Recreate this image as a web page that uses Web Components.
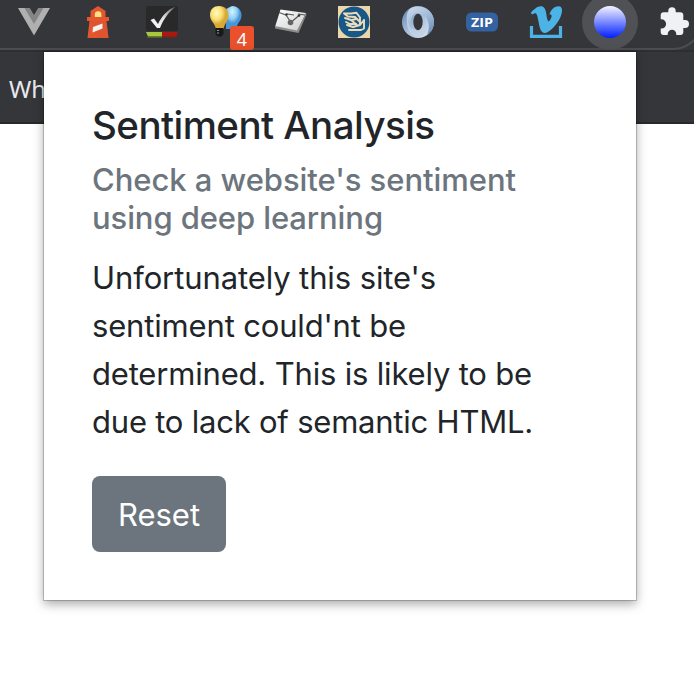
<!DOCTYPE html>
<html lang="en">
<head>
<meta charset="utf-8">
<title>Sentiment Analysis</title>
<style>
html,body{margin:0;height:100%;background:#fff;overflow:hidden}
body{font-family:Inter,"Liberation Sans",sans-serif;color:#212529}
</style>
</head>
<body>
<browser-window>
  <extension-bar slot="chrome">
    <extension-icon name="vue"></extension-icon>
    <extension-icon name="lighthouse"></extension-icon>
    <extension-icon name="check"></extension-icon>
    <extension-icon name="bulbs" badge="4"></extension-icon>
    <extension-icon name="envelope"></extension-icon>
    <extension-icon name="hands"></extension-icon>
    <extension-icon name="ring"></extension-icon>
    <extension-icon name="zip"></extension-icon>
    <extension-icon name="vimeo"></extension-icon>
    <extension-icon name="sphere" active></extension-icon>
    <extension-icon name="puzzle"></extension-icon>
  </extension-bar>
  <bookmark-bar slot="chrome">Wh</bookmark-bar>
  <popup-card>
    <fit-line slot="title" width="342.5">Sentiment Analysis</fit-line>
    <fit-line slot="subtitle" width="424">Check a website's sentiment</fit-line>
    <fit-line slot="subtitle" width="291">using deep learning</fit-line>
    <fit-line slot="body" width="344">Unfortunately this site's</fit-line>
    <fit-line slot="body" width="314">sentiment could'nt be</fit-line>
    <fit-line slot="body" width="440">determined. This is likely to be</fit-line>
    <fit-line slot="body" width="441">due to lack of semantic HTML.</fit-line>
    <reset-button slot="action">Reset</reset-button>
  </popup-card>
</browser-window>

<script>
const icons = {
vue:`<path d="M2 8H13L18 15.5 23 8H34L18 35.5Z" fill="#b0b0b0"/><path d="M8.500 8H14L18 15 22 8H27.500L18 24Z" fill="#858585"/><path d="M14 8H22L18 14.500Z" fill="#35363a"/>`,
lighthouse:`<path d="M18 6L25.500 11V17H29V21H26.500L28.500 38H7.500L9.500 21H7V17H10.500V11Z" fill="#e4572e"/><path d="M10.500 21H26.500L28.500 38H18Z" fill="#cf4f30" opacity=".3"/><path d="M14.800 17V14.500a3.300 3.300 0 0 1 6.600 0V17Z" fill="#ffe184"/><path d="M13 27L22.500 23.500V28.500L12.500 32.500Z" fill="#f2f2f2"/>`,
check:`<defs><linearGradient id="c" x1="0" y1="1" x2="1" y2="0"><stop stop-color="#fff"/><stop offset=".5" stop-color="#e0e0e0"/><stop offset="1" stop-color="#666"/></linearGradient></defs><rect x="2" y="6" width="32" height="25" rx="2" fill="#29292a"/><path d="M6.500 20L10 18.500 14 24C18 16 23 10 31.500 6.500C25 12 19.500 19 16 28H13Z" fill="url(#c)"/><path d="M2 32H18V36.500H4Z" fill="#a7c83d"/><path d="M18 32H34L32 36.500H18Z" fill="#ad1712"/><path d="M3 37.300H33" stroke="#62652c"/><path d="M18 37.300H33" stroke="#751713"/>`,
bulbs:`<defs><radialGradient id="y" cx=".35" cy=".3"><stop stop-color="#fffbc7"/><stop offset=".6" stop-color="#f9df72"/><stop offset="1" stop-color="#d9a936"/></radialGradient><radialGradient id="b" cx=".4" cy=".25"><stop stop-color="#d6f5ff"/><stop offset=".65" stop-color="#89cdf5"/><stop offset="1" stop-color="#4a95d7"/></radialGradient></defs><path d="M24 6C30 6 33.500 10.500 33.500 15C33.500 21 29 23 28 29H18V9Z" fill="url(#b)"/><path d="M11 6C17 6 20.500 10 20.500 15C20.500 21 16.500 23 15.500 29H8C7 23 2 21 2 15C2 9 6 6 11 6Z" fill="url(#y)"/><path d="M7.500 28H15.500V34L13.500 36.500H9.500L7.500 34Z" fill="#19191a"/><path d="M9 30.500H11M9 33H11" stroke="#9a9a94" stroke-width="1.200"/>`,
envelope:`<defs><linearGradient id="e" x1="0" y1="0" x2="1" y2="1"><stop stop-color="#fff"/><stop offset="1" stop-color="#ccc"/></linearGradient></defs><path d="M8.500 9.500L34 13 25 31.500 3 27Z" fill="url(#e)"/><path d="M34 13L34.500 14.500 26.500 33 3 28.500V26L25 30.500Z" fill="#8d8d8d"/><path d="M7 12.500L14 15M14 15L18 21M20.500 21L27 15.500M15 14L22 15M26 14L33 15" stroke="#555" fill="none" stroke-width="1.200"/><circle cx="18.500" cy="22.500" r="2.800" fill="#626262"/><circle cx="14.500" cy="14.500" r="1.200" fill="#333"/><circle cx="27" cy="15.500" r="1.300" fill="#333"/>`,
hands:`<rect x="2" y="6" width="32" height="32" fill="#ecd7ad"/><circle cx="18" cy="22" r="15.500" fill="#175888"/><g fill="none" stroke="#eedcb9" stroke-width="1.900" stroke-linejoin="round" stroke-linecap="round"><path d="M8 13.500H15L20.500 12.800L24 17.500V24M8 13.500L12 16.500L19 17L24 22M9 18L15 20L21 25"/><path d="M28 20V28.500L25 30H13M28 20L24 25L17 27L11 25M10 22L14 24L20 24M16 20L20 19"/></g>`,
ring:`<defs><linearGradient id="r" x1="0" y1="0" x2="1" y2="1"><stop stop-color="#5c80ad"/><stop offset=".45" stop-color="#a3bbd8"/><stop offset="1" stop-color="#e5edf7"/></linearGradient><linearGradient id="s" x1=".1" y1="0" x2=".8" y2="1"><stop stop-color="#e5edf7"/><stop offset=".55" stop-color="#99b4d4"/><stop offset="1" stop-color="#557ba9"/></linearGradient></defs><circle cx="18" cy="22" r="16" fill="url(#r)"/><path d="M11 8C22 3 34 11 34 22C34 28 31 33 27 35C31 26 29 16 18 13C11 13 9 22 12 30C5 24 5 12 11 8Z" fill="url(#s)" opacity=".8"/><path d="M9 12C5 20 10 31 18 31C24 31 28 24 25 15C31 24 27 35 18 37C8 37 4 21 9 12Z" fill="#c1d2e7" opacity=".75"/><ellipse cx="18" cy="22" rx="4.700" ry="8.300" fill="#35363a"/>`,
zip:`<rect x="2" y="12.500" width="32" height="19" rx="5.500" fill="#34619f"/><text x="18" y="26.500" text-anchor="middle" textLength="22" lengthAdjust="spacingAndGlyphs" fill="#fff" font-family="Open Sans,sans-serif" font-weight="700" font-size="12.500">ZIP</text>`,
vimeo:`<path d="M2.700 13C6 9 10 6 13 6.300C18 6.500 18 13 19 18C19.500 21 20.500 22.500 22 20C24 17 24.500 14 21.500 14.500C23 9 27 6 31 6.300C36 7 34 15 31 20C27 27 20 33 17 33C12 33 11.500 26 10 19C9 13.500 8 12 4.500 14.500Z" fill="#4cb3e6"/><path d="M3.500 26V36.300H32.500V26" fill="none" stroke="#4cb3e6" stroke-width="3.200"/>`,
sphere:`<defs><linearGradient id="p" x1="0" y1="0" x2="0" y2="1"><stop stop-color="#f5f5ff"/><stop offset="1" stop-color="#001fff"/></linearGradient></defs><circle cx="18" cy="22" r="16" fill="url(#p)"/>`,
puzzle:`<path d="M7.700 12.300H12.300V11a3.700 3.700 0 0 1 7.400 0V12.300H24.300Q27.300 12.300 27.300 15.300V20H29a4 4 0 0 1 0 8H27.300V32Q27.300 35 24.300 35H20.300V34a4.300 4.300 0 0 0-8.600 0V35H7.700Q4.700 35 4.700 32V28.500H5.500a4.600 4.600 0 0 0 0-9.200H4.700V15.300Q4.700 12.300 7.700 12.300Z" fill="#f0f1f3"/>`
};
function define(name, html, setup){
  const template=document.createElement('template'); template.innerHTML=html;
  customElements.define(name,class extends HTMLElement{
    connectedCallback(){
      if(this.shadowRoot)return;
      this.attachShadow({mode:'open'}).append(template.content.cloneNode(true));
      if(setup)setup(this,this.shadowRoot);
    }
  });
}
define('browser-window',`<style>:host{display:block;position:relative;height:674px;overflow:hidden;background:#fff}</style><slot name="chrome"></slot><slot></slot>`);
define('extension-bar',`<style>:host{display:block;position:relative;height:52px;overflow:hidden;box-sizing:border-box;background:#35363a;border-bottom:2px solid #2d2e31}
.pill{position:absolute;right:-9px;bottom:0;width:760px;height:70px;box-sizing:border-box;border:2px solid #4c4d50;border-radius:30px}
.row{display:flex;position:relative;padding-left:2px;width:704px}</style><div class="pill"></div><div class="row"><slot></slot></div>`);
define('extension-icon',`<style>:host{display:flex;position:relative;width:64px;height:50px;flex:none;justify-content:center}
svg{display:block;width:36px;height:44px;position:relative}.halo{display:none;position:absolute;width:56px;height:56px;border-radius:50%;background:#505154;left:4px;top:-6px}
:host([active]) .halo{display:block}.badge{position:absolute;left:36px;top:26px;width:24px;height:24px;border-radius:3px;background:#e8512b;color:#fff;font:18px/27px "Noto Sans",sans-serif;text-align:center}.badge:empty{display:none}</style><span class="halo"></span><svg viewBox="0 0 36 44"></svg><span class="badge"></span>`,(el,root)=>{
  root.querySelector('svg').innerHTML=icons[el.getAttribute('name')];
  root.querySelector('.badge').textContent=el.getAttribute('badge')||'';
});
define('bookmark-bar',`<style>:host{display:flex;align-items:center;height:72px;box-sizing:border-box;padding:4px 0 0 9px;background:#35363a;border-bottom:2px solid #28292c;color:#e8eaed;font:24px/30px "Noto Sans",sans-serif}</style><slot></slot>`);
define('popup-card',`<style>:host{display:flex;flex-direction:column;align-items:flex-start;position:absolute;left:44px;top:52px;width:592px;height:548px;box-sizing:border-box;padding:49px 48px 47px;background:#fff;box-shadow:0 0 0 1px rgba(0,0,0,.2),0 4px 10px rgba(0,0,0,.35)}
h5,h6,p{margin:0}h5{font-size:38.500px;line-height:48px;font-weight:500;margin-bottom:12px}h6{font-size:31px;line-height:38.400px;font-weight:500;color:#6c757d;margin-bottom:16px}p{font-size:31px;line-height:48px;margin-bottom:30.200px}</style>
<h5><slot name="title"></slot></h5><h6><slot name="subtitle"></slot></h6><p><slot name="body"></slot></p><slot name="action"></slot>`);
define('fit-line',`<style>:host{display:block;white-space:nowrap}span{display:inline-block;line-height:inherit;vertical-align:top}</style><span><slot></slot></span>`,(el,root)=>{
  el.fit=()=>{const span=root.querySelector('span');span.style.letterSpacing='0';
    const gap=Number(el.getAttribute('width'))-span.getBoundingClientRect().width;
    span.style.letterSpacing=(gap/el.textContent.length)+'px';};
});
define('reset-button',`<style>:host{display:block}button{display:block;width:134px;height:76px;border:0;border-radius:8px;padding:2px 0 0;background:#6c757d;color:#fff;font:400 31px/48px Inter,sans-serif}</style><button><slot></slot></button>`);
document.querySelectorAll('fit-line').forEach(line=>line.fit());
</script>
</body>
</html>
